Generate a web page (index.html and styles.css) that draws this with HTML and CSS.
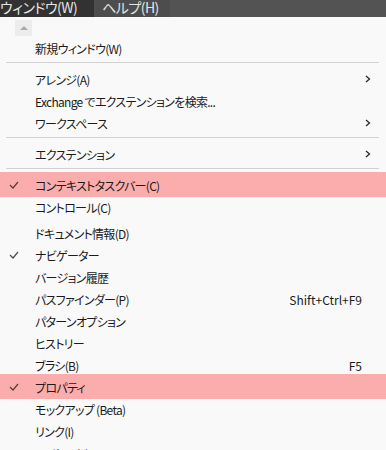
FILE: index.html
```html
<!DOCTYPE html>
<html lang="ja">
  <head>
    <meta charset="UTF-8" />
    <meta name="viewport" content="width=device-width, initial-scale=1.0" />
    <title>ウィンドウ</title>
    <link rel="stylesheet" href="styles.css">
  </head>
  <body>
    <div class="menubar">
      <span class="tab tab-open">ウィンドウ(W)</span>
      <span class="tab tab-next">ヘルプ(H)</span>
    </div>

    <div class="menu">
      <div class="scroll-up"><span class="arrow-up"></span></div>

      <div class="item"><span class="label">新規ウィンドウ(W)</span></div>
      <div class="sep"></div>

      <div class="item">
        <span class="label">アレンジ(A)</span>
        <svg class="sub" width="6" height="8" viewBox="0 0 6 8"><polyline points="1,1 4.5,4 1,7" /></svg>
      </div>
      <div class="item"><span class="label">Exchange でエクステンションを検索...</span></div>
      <div class="item">
        <span class="label">ワークスペース</span>
        <svg class="sub" width="6" height="8" viewBox="0 0 6 8"><polyline points="1,1 4.5,4 1,7" /></svg>
      </div>
      <div class="sep"></div>

      <div class="item">
        <span class="label">エクステンション</span>
        <svg class="sub" width="6" height="8" viewBox="0 0 6 8"><polyline points="1,1 4.5,4 1,7" /></svg>
      </div>
      <div class="sep"></div>

      <div class="item hl">
        <svg class="check" width="10" height="8" viewBox="0 0 10 8"><polyline points="1,4 4,7 9,1" /></svg>
        <span class="label">コンテキストタスクバー(C)</span>
      </div>
      <div class="item"><span class="label">コントロール(C)</span></div>
      <div class="item gap"><span class="label">ドキュメント情報(D)</span></div>
      <div class="item">
        <svg class="check" width="10" height="8" viewBox="0 0 10 8"><polyline points="1,4 4,7 9,1" /></svg>
        <span class="label">ナビゲーター</span>
      </div>
      <div class="item"><span class="label">バージョン履歴</span></div>
      <div class="item"><span class="label">パスファインダー(P)</span><span class="key">Shift+Ctrl+F9</span></div>
      <div class="item"><span class="label">パターンオプション</span></div>
      <div class="item"><span class="label">ヒストリー</span></div>
      <div class="item"><span class="label">ブラシ(B)</span><span class="key">F5</span></div>
      <div class="item hl">
        <svg class="check" width="10" height="8" viewBox="0 0 10 8"><polyline points="1,4 4,7 9,1" /></svg>
        <span class="label">プロパティ</span>
      </div>
      <div class="item"><span class="label">モックアップ (Beta)</span></div>
      <div class="item"><span class="label">リンク(I)</span></div>
      <div class="item"><span class="label">レイヤー(L)</span><span class="key">F7</span></div>
    </div>
  </body>
</html>
```

FILE: styles.css
```css
body{
  margin: 0;
  background-color: #f9f9f9;
  font-family: "Noto Sans CJK JP", "Noto Sans", sans-serif;
  font-feature-settings: "palt";
  overflow: hidden;
}
.menubar{
  display: flex;
  height: 17px;
  background-color: #535353;
  font-size: 14px;
  line-height: 14px;
  color: #e4e4e4;
  overflow: hidden;
}
.tab{
  height: 17px;
  white-space: nowrap;
  letter-spacing: -0.5px;
}
.tab-open{
  width: 94px;
  background-color: #323232;
}
.tab-next{
  width: 68px;
  padding-left: 8px;
  background-color: #4d4d4d;
}
.menu{
  padding-top: 3px;
  font-size: 12px;
  color: #1b1b1b;
}
.scroll-up{
  display: flex;
  align-items: center;
  justify-content: center;
  width: 17px;
  height: 16px;
  margin-left: 15px;
  background-color: #ececec;
}
.arrow-up{
  width: 0;
  height: 0;
  border-left: 4px solid transparent;
  border-right: 4px solid transparent;
  border-bottom: 4px solid #a9a9a9;
}
.item{
  position: relative;
  display: flex;
  align-items: center;
  height: 22px;
  padding-left: 35px;
  padding-right: 24px;
  white-space: nowrap;
}
.scroll-up + .item{
  margin-top: 1px;
}
.item.gap{
  margin-top: 4px;
}
.hl{
  background-color: #fbadad;
  box-shadow: 0 -2px 0 #fbadad, 0 1px 0 #fbadad;
}
.check{
  position: absolute;
  left: 9px;
  top: 7px;
  fill: none;
  stroke: #4a4a4a;
  stroke-width: 1.2;
}
.hl .check{
  stroke: #5a3b3b;
}
.label{
  flex: 1;
  letter-spacing: -0.7px;
}
.sub{
  margin-right: -9px;
  fill: none;
  stroke: #2a2a2a;
  stroke-width: 1.3;
}
.key{
  font-size: 12px;
}
.sep{
  height: 1px;
  margin: 3px 7px 5px 6px;
  background-color: #d2d2d2;
}
```
